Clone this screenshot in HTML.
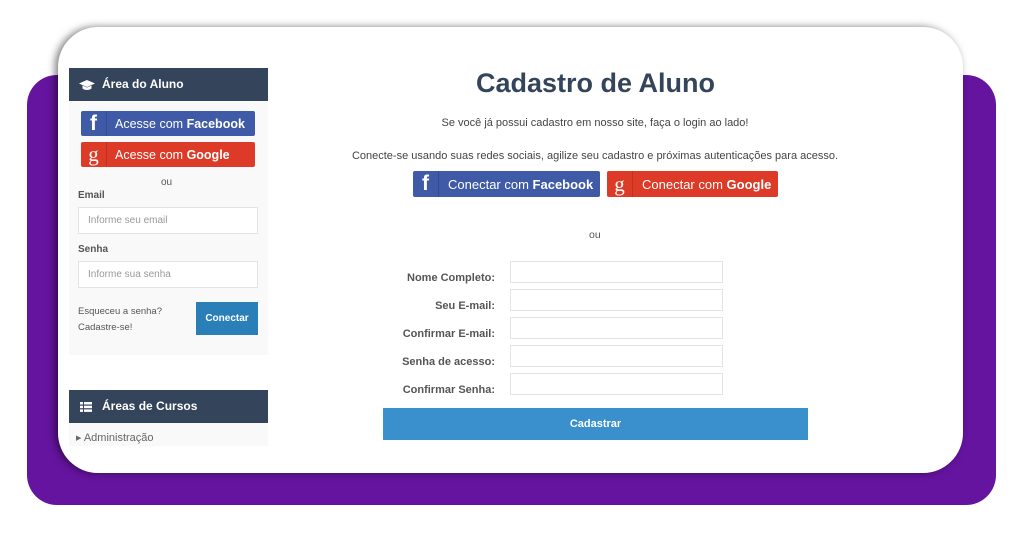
<!DOCTYPE html>
<html><head><meta charset="utf-8"><style>
*{margin:0;padding:0;box-sizing:border-box}
body{width:1024px;height:536px;background:#fff;position:relative;overflow:hidden;font-family:"Liberation Sans",sans-serif;color:#555}
.a{position:absolute}
.purple{left:27px;top:75px;width:969px;height:430px;background:#65149f;border-radius:30px}
.card{left:58px;top:27px;width:905px;height:446px;background:#fff;border-radius:40px;box-shadow:-3px 0px 8px rgba(0,0,0,.5)}
.hd{background:#34445a;color:#fff;font-weight:bold;font-size:12px;line-height:33px;padding-left:33px}
.btn{color:#fff;border-radius:2px;font-size:13px;display:flex;align-items:center;white-space:nowrap}
.btn .ic{width:26px;flex:none;height:100%;border-right:1px solid rgba(0,0,0,.15);display:flex;align-items:center;justify-content:center;font-size:21px;font-family:"Liberation Serif",serif}
.fb{background:#3f5aa6}.gg{background:#dd3b28}
.inp{background:#fff;border:1px solid #e3e3e3}
.lbl{font-size:11px;font-weight:bold;color:#555;text-align:right;width:120px;left:375px}
</style></head><body>
<div class="a purple"></div>
<div class="a card"></div>

<div class="a" style="left:69px;top:68px;width:199px;height:287px;background:#f9f9f9"></div>
<div class="a hd" style="left:69px;top:68px;width:199px;height:33px">Área do Aluno</div>
<svg class="a" style="left:79px;top:79px" width="16" height="12" viewBox="0 0 16 12"><path d="M8 1L0 4.5 8 8 16 4.5z M3.5 6.5v3c2 2 7 2 9 0v-3L8 8.5z" fill="#fff"/></svg>
<div class="a btn fb" style="left:81px;top:111px;width:174px;height:25px;font-size:12.5px"><span class="ic" style="font-family:'Liberation Sans';font-weight:bold">f</span><span style="margin-left:8px">Acesse com <b>Facebook</b></span></div>
<div class="a btn gg" style="left:81px;top:142px;width:174px;height:25px;font-size:12.5px"><span class="ic">g</span><span style="margin-left:8px">Acesse com <b>Google</b></span></div>
<div class="a" style="left:161px;top:177px;font-size:10px">ou</div>
<div class="a" style="left:78px;top:190px;font-size:10px;font-weight:bold">Email</div>
<div class="a inp" style="left:78px;top:207px;width:180px;height:27px;font-size:10px;color:#999;padding:7px 9px">Informe seu email</div>
<div class="a" style="left:78px;top:244px;font-size:10px;font-weight:bold">Senha</div>
<div class="a inp" style="left:78px;top:261px;width:180px;height:27px;font-size:10px;color:#999;padding:7px 9px">Informe sua senha</div>
<div class="a" style="left:78px;top:304px;font-size:9.5px;line-height:16px">Esqueceu a senha?<br>Cadastre-se!</div>
<div class="a" style="left:196px;top:302px;width:62px;height:33px;background:#2a7fb8;color:#fff;font-size:10px;font-weight:bold;text-align:center;line-height:33px">Conectar</div>

<div class="a hd" style="left:69px;top:390px;width:199px;height:33px">Áreas de Cursos</div>
<svg class="a" style="left:80px;top:402px" width="12" height="10"><rect x="0" y="0" width="3" height="2.5" fill="#fff"/><rect x="4" y="0" width="8" height="2.5" fill="#fff"/><rect x="0" y="3.7" width="3" height="2.5" fill="#fff"/><rect x="4" y="3.7" width="8" height="2.5" fill="#fff"/><rect x="0" y="7.4" width="3" height="2.5" fill="#fff"/><rect x="4" y="7.4" width="8" height="2.5" fill="#fff"/></svg>
<div class="a" style="left:69px;top:423px;width:199px;height:23px;background:#f9f9f9"></div>
<div class="a" style="left:76px;top:432px;font-size:11px;color:#666"><span style="font-size:7px;vertical-align:1px">▶</span> Administração</div>

<div class="a" style="left:383px;top:68px;width:425px;text-align:center;font-size:27px;font-weight:bold;color:#34445a">Cadastro de Aluno</div>
<div class="a" style="left:345px;top:117px;width:500px;text-align:center;font-size:11px;color:#444">Se você já possui cadastro em nosso site, faça o login ao lado!</div>
<div class="a" style="left:325px;top:150px;width:540px;text-align:center;font-size:11px;color:#444">Conecte-se usando suas redes sociais, agilize seu cadastro e próximas autenticações para acesso.</div>
<div class="a btn fb" style="left:413px;top:171px;width:187px;height:26px"><span class="ic" style="font-family:'Liberation Sans';font-weight:bold">f</span><span style="margin-left:9px">Conectar com <b>Facebook</b></span></div>
<div class="a btn gg" style="left:607px;top:171px;width:171px;height:26px"><span class="ic">g</span><span style="margin-left:9px">Conectar com <b>Google</b></span></div>
<div class="a" style="left:589px;top:229px;font-size:10.5px">ou</div>

<div class="a lbl" style="top:272px">Nome Completo:</div>
<div class="a lbl" style="top:300px">Seu E-mail:</div>
<div class="a lbl" style="top:328px">Confirmar E-mail:</div>
<div class="a lbl" style="top:356px">Senha de acesso:</div>
<div class="a lbl" style="top:384px">Confirmar Senha:</div>
<div class="a inp" style="left:510px;top:261px;width:213px;height:22px"></div>
<div class="a inp" style="left:510px;top:289px;width:213px;height:22px"></div>
<div class="a inp" style="left:510px;top:317px;width:213px;height:22px"></div>
<div class="a inp" style="left:510px;top:345px;width:213px;height:22px"></div>
<div class="a inp" style="left:510px;top:373px;width:213px;height:22px"></div>
<div class="a" style="left:383px;top:408px;width:425px;height:32px;background:#3990cc;color:#fff;font-size:11px;font-weight:bold;text-align:center;line-height:33px">Cadastrar</div>
</body></html>
